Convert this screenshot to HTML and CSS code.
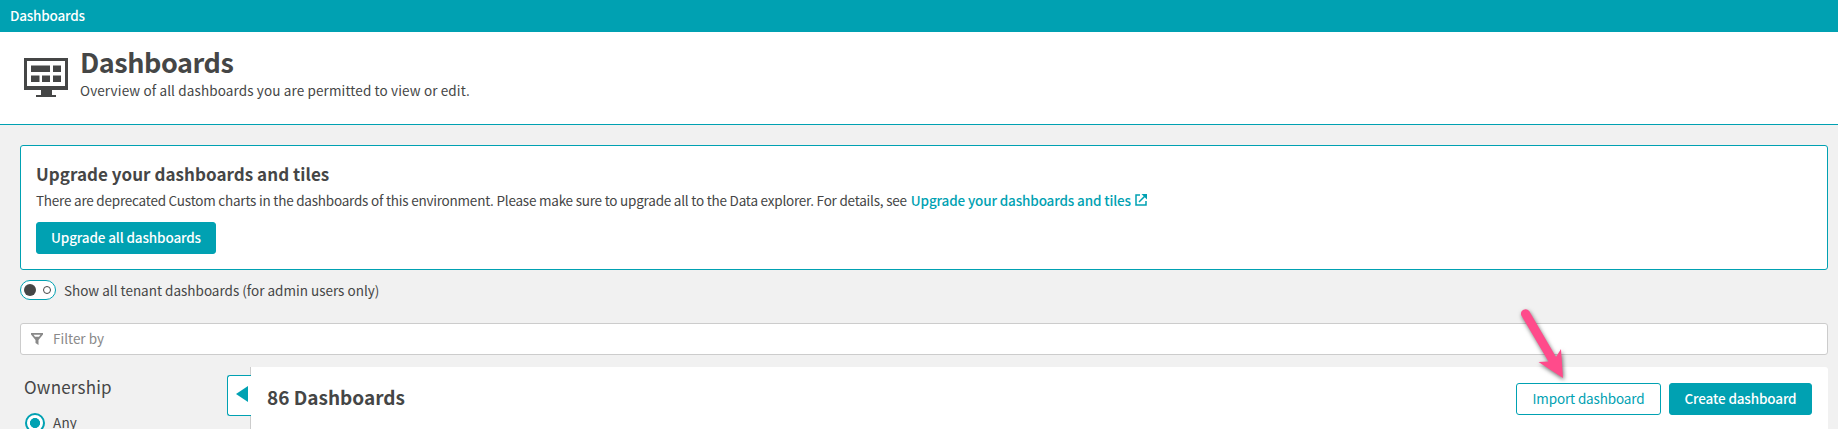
FILE: index.html
```html
<!DOCTYPE html>
<html lang="en">
<head>
<meta charset="utf-8">
<title>Dashboards</title>
<link rel="stylesheet" href="styles.css">
</head>
<body>
<nav class="topbar"><span class="crumb">Dashboards</span></nav>
<header class="header">
  <svg class="header-icon" width="44" height="40" viewBox="0 0 44 40" fill="#454646">
    <path fill-rule="evenodd" d="M0 0h44v32H28v5h4v2H12v-2h5v-5H0zM3 3v25h38V3z"/>
    <path d="M7 7.500h19v6.500H7zM29 7.500h8v6.500h-8zM7 17.500h8.500v6.500H7zM18 17.500h8v6.500h-8zM29 17.500h8v6.500h-8z"/>
  </svg>
  <div>
    <h1 class="title"><span>Dashboards</span></h1>
    <p class="subtitle"><span>Overview of all dashboards you are permitted to view or edit.</span></p>
  </div>
</header>
<main class="content">
  <section class="notice">
    <h2 class="notice-title"><span>Upgrade your dashboards and tiles</span></h2>
    <p class="notice-text"><span class="notice-copy">There are deprecated Custom charts in the dashboards of this environment. Please make sure to upgrade all to the Data explorer. For details, see</span><a class="link">Upgrade your dashboards and tiles</a><svg class="external" width="12" height="12" viewBox="0 0 12 12" fill="none" stroke="#00a1b2" stroke-width="1.500"><path d="M5 1H1v10h10V7M4 8l6-6"/><path d="M6.500 0H12v5.500z" fill="#00a1b2" stroke="none"/></svg></p>
    <button class="button primary upgrade">Upgrade all dashboards</button>
  </section>
  <div class="switch-row">
    <span class="switch"><i class="knob"></i><i class="ring"></i></span>
    <span class="switch-label">Show all tenant dashboards (for admin users only)</span>
  </div>
  <div class="filter">
    <svg width="12" height="12" viewBox="0 0 12 12" fill="#898989"><path fill-rule="evenodd" d="M0 0h12v1.500L7.500 7v5l-3-2V7L0 1.500zM2.500 1.700l1.500 2h4l1.500-2z"/></svg>
    <span class="filter-text">Filter by</span>
  </div>
  <div class="columns">
    <aside class="sidebar">
      <h3 class="group-title">Ownership</h3>
      <label class="option"><i class="radio"></i><span class="option-text">Any</span></label>
    </aside>
    <div class="collapse"><svg width="12" height="16" viewBox="0 0 12 16"><path d="M12 0v16L0 8z" fill="#00a1b2"/></svg></div>
    <section class="panel">
      <h2 class="count">86 Dashboards</h2>
      <button class="button secondary">Import dashboard</button>
      <button class="button primary create">Create dashboard</button>
    </section>
  </div>
</main>
<svg class="pointer" width="70" height="90" viewBox="0 0 70 90"><path d="M21.200 15.200A4.600 4.600 0 0 1 29.200 11L56 57L61 49L63 78L38.500 62L48.500 61.500Z" fill="#ff4b8b"/></svg>
</body>
</html>
```
FILE: styles.css
```css
* { box-sizing: border-box; }
body {
  margin: 0;
  height: 429px;
  overflow: hidden;
  background: #f1f1f1;
  color: #454646;
  font: 500 13.5px/20px "Noto Sans CJK SC", "Noto Sans", sans-serif;
  letter-spacing: -.14px;
}
h1, h2, h3, p { margin: 0; white-space: nowrap; }
.topbar { height: 32px; padding: 5px 10px; background: #00a1b2; color: #fff; letter-spacing: -.2px; }
.header { display: flex; height: 93px; padding-left: 24px; gap: 12px; background: #fff; border-bottom: 1px solid #00a1b2; }
.header-icon { margin-top: 26px; }
.title { margin-top: 11px; font-size: 27px; font-weight: 700; line-height: 38px; letter-spacing: -.45px; }
.subtitle { line-height: 20px; margin-top: -1px; font-weight: 400; letter-spacing: .13px; }
.content { padding: 20px 10px 0 20px; }
.notice { height: 125px; padding: 16px 15px; background: #fff; border: 1px solid #00a1b2; border-radius: 3px; }
.notice-title { font-size: 17px; font-weight: 700; line-height: 24px; letter-spacing: .05px; }
.notice-text { display: flex; align-items: center; margin-top: 4px; font-weight: 400; }
.notice-copy { letter-spacing: -.22px; }
.link { margin-left: 4px; color: #00a1b2; font-weight: 500; }
.external { margin-left: 4px; }
.button { height: 32px; padding: 0 0 2px; border: 1px solid #00a1b2; border-radius: 3px; font: inherit; letter-spacing: inherit; white-space: nowrap; }
.primary { background: #00a1b2; color: #fff; }
.secondary { width: 145px; margin-right: 8px; background: #fff; color: #00a1b2; font-weight: 400; }
.upgrade { display: block; width: 180px; margin-top: 12px; }
.create { width: 143px; }
.switch-row { display: flex; align-items: center; gap: 8px; height: 20px; margin-top: 10px; }
.switch { display: flex; align-items: center; justify-content: space-between; width: 36px; height: 20px; padding: 0 4px 0 3px; border: 1px solid #00a1b2; border-radius: 10px; background: #fff; }
.switch-label { margin-top: -1px; font-weight: 400; letter-spacing: 0; }
.knob { width: 12px; height: 12px; border-radius: 50%; background: #454646; }
.ring { width: 8px; height: 8px; border: 1.5px solid #454646; border-radius: 50%; }
.filter { display: flex; align-items: center; gap: 10px; height: 32px; margin-top: 23px; padding: 0 10px; background: #fff; border: 1px solid #ccc; border-radius: 3px; color: #898989; font-weight: 400; letter-spacing: 0; }
.filter-text { margin-top: -3px; }
.columns { display: flex; margin-top: 12px; height: 62px; }
.sidebar { width: 207px; padding: 9px 0 0 5px; }
.group-title { margin-left: -1px; font-size: 17px; font-weight: 400; line-height: 22px; letter-spacing: .2px; }
.option { display: flex; align-items: center; gap: 8px; height: 20px; margin-top: 15px; font-weight: 400; }
.option-text { margin-top: -3px; letter-spacing: .2px; }
.radio { width: 20px; height: 20px; border: 2px solid #00a1b2; border-radius: 50%; background: radial-gradient(circle, #00a1b2 0 4.700px, #fff 5.300px); }
.collapse { position: relative; z-index: 1; width: 24px; height: 41px; margin: 8px -1px 0 0; padding: 10px 0 0 8px; background: #fff; border: 1px solid #00a1b2; border-right: 0; border-radius: 3px 0 0 3px; }
.collapse svg { display: block; }
.panel { display: flex; flex: 1; padding: 16px 16px 0 16px; background: #fff; border-left: 1px solid #ccc; border-top-right-radius: 3px; }
.count { flex: 1; font-size: 19px; font-weight: 700; line-height: 28px; letter-spacing: 0; }
.pointer { position: absolute; left: 1500px; top: 300px; filter: drop-shadow(1px 2px 2px rgb(0 0 0 / 55%)); }
```
